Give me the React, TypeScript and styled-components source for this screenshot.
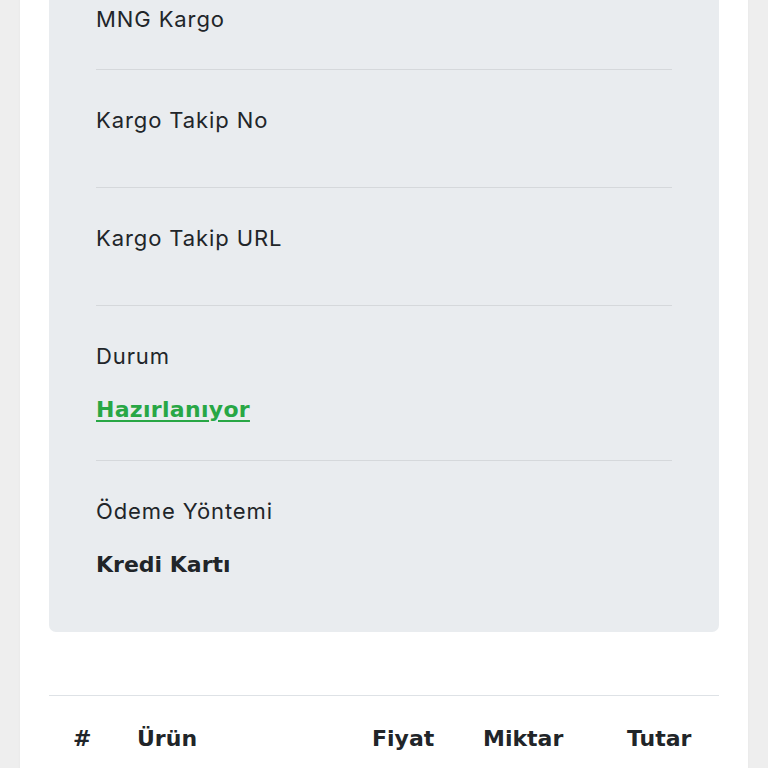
import React from "react";
import styled, { createGlobalStyle } from "styled-components";

const Global = createGlobalStyle`
  html, body { margin: 0; padding: 0; background: #eeeeee; }
  body { font-family: Inter, "Noto Sans", sans-serif; color: #212529; overflow: hidden; }
`;

const Page = styled.div`
  height: 768px;
  overflow: hidden;
  padding: 0 20px;
`;

const Container = styled.div`
  background: #ffffff;
  margin-top: -84px;
  padding: 0 29px;
  min-height: 900px;
  box-shadow: 0 0 3px rgba(0, 0, 0, 0.04);
`;

const InfoCard = styled.div`
  background: #e9ecef;
  border-radius: 0 0 7px 7px;
  padding: 0 47px 17px;
`;

const Row = styled.div<{ $last?: boolean }>`
  padding: 34px 0 34px;
  border-bottom: ${(p) => (p.$last ? "none" : "1px solid #d5d8db")};
  display: flex;
  flex-direction: column;
`;

const Label = styled.div`
  font-size: 22px;
  line-height: 33px;
  font-weight: 400;
  letter-spacing: 0.9px;
`;

const Value = styled.div<{ $empty?: boolean }>`
  margin-top: ${(p) => (p.$empty ? "16px" : "20px")};
  line-height: 32px;
  font-size: 22px;
  letter-spacing: 0.9px;
  ${(p) => (p.$empty ? "height: 0;" : "")}
`;

const Strong = styled.span`
  font-family: "DejaVu Sans", Verdana, sans-serif;
  font-weight: 700;
  letter-spacing: 0;
`;

const StatusLink = styled.a`
  font-family: "DejaVu Sans", Verdana, sans-serif;
  color: #28a745;
  font-weight: 700;
  letter-spacing: 0.3px;
  text-decoration: underline;
  text-underline-offset: 3px;
  text-decoration-thickness: 2px;
`;

const Table = styled.div`
  margin-top: 63px;
  border-top: 1.5px solid #dee2e6;
`;

const HeaderRow = styled.div`
  display: grid;
  grid-template-columns: 64px 235px 111px 144px 1fr;
  padding: 26px 0 0 24px;
`;

const HeadCell = styled.div`
  font-family: "DejaVu Sans", Verdana, sans-serif;
  font-size: 22px;
  line-height: 33px;
  font-weight: 700;
  color: #212529;
`;

const rows: { label: string; value?: React.ReactNode }[] = [
  { label: "Kargo Firması", value: "MNG Kargo" },
  { label: "Kargo Takip No" },
  { label: "Kargo Takip URL" },
  { label: "Durum", value: <StatusLink href="#">Hazırlanıyor</StatusLink> },
  { label: "Ödeme Yöntemi", value: <Strong>Kredi Kartı</Strong> },
];

export default function App() {
  return (
    <>
      <Global />
      <Page>
        <Container>
          <InfoCard>
            {rows.map((r, i) => (
              <Row key={r.label} $last={i === rows.length - 1}>
                <Label>{r.label}</Label>
                {r.value ? <Value>{r.value}</Value> : <Value $empty />}
              </Row>
            ))}
          </InfoCard>
          <Table>
            <HeaderRow>
              <HeadCell>#</HeadCell>
              <HeadCell>Ürün</HeadCell>
              <HeadCell>Fiyat</HeadCell>
              <HeadCell>Miktar</HeadCell>
              <HeadCell>Tutar</HeadCell>
            </HeaderRow>
          </Table>
        </Container>
      </Page>
    </>
  );
}
